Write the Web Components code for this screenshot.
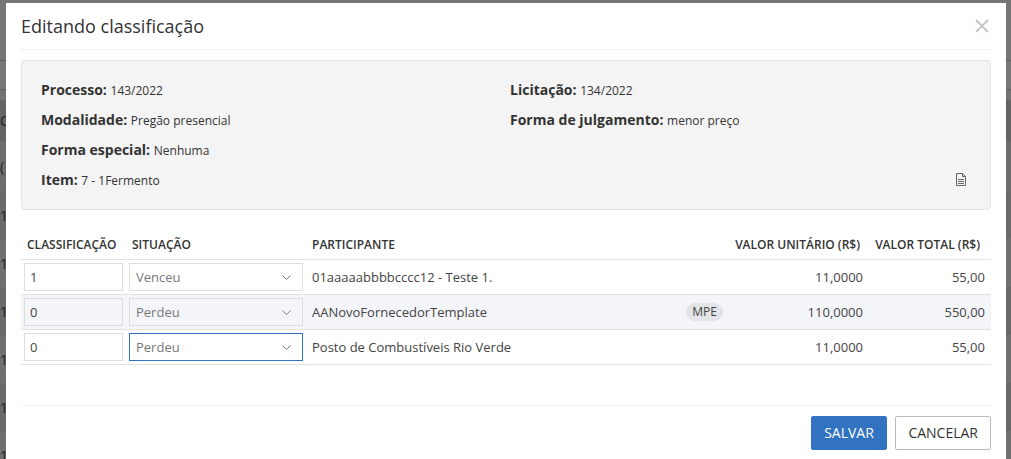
<!DOCTYPE html>
<html lang="pt-BR">
<head>
<meta charset="utf-8">
<title>Editando classificação</title>
<style>
  html, body { margin: 0; height: 100%; overflow: hidden; }
  body { font-family: "Open Sans", "Liberation Sans", sans-serif; color: #333; }
</style>
</head>
<body>
<page-behind></page-behind>
<edit-modal heading="Editando classificação">
  <info-card>
    <info-item label="Processo:" value="143/2022"></info-item>
    <info-item label="Licitação:" value="134/2022"></info-item>
    <info-item label="Modalidade:" value="Pregão presencial"></info-item>
    <info-item label="Forma de julgamento:" value="menor preço"></info-item>
    <info-item label="Forma especial:" value="Nenhuma"></info-item>
    <span></span>
    <info-item label="Item:" value="7 - 1Fermento"></info-item>
  </info-card>
  <rank-table>
    <rank-row classificacao="1" situacao="Venceu" participante="01aaaaabbbbcccc12 - Teste 1." unitario="11,0000" total="55,00"></rank-row>
    <rank-row classificacao="0" situacao="Perdeu" participante="AANovoFornecedorTemplate" unitario="110,0000" total="550,00" badge="MPE" disabled></rank-row>
    <rank-row classificacao="0" situacao="Perdeu" participante="Posto de Combustíveis Rio Verde" unitario="11,0000" total="55,00" focused></rank-row>
  </rank-table>
  <modal-button slot="footer" primary>SALVAR</modal-button>
  <modal-button slot="footer">CANCELAR</modal-button>
</edit-modal>

<script>
class PageBehind extends HTMLElement {
  constructor () {
    super();
    this.attachShadow({mode: 'open'});
    // height, colour, text, colour of the line under the row
    const rows = [[60, '#767676', '', '#5f5f5f'], [28, '#777777', '', '#5f5f5f'], [10, '#737373', '', ''],
      [41, '#646464', 'C', ''], [50, '#6d6d6d', '(', ''],
      [48, '#6a6a6a', '1', ''], [48, '#707070', '1', ''], [48, '#696969', '1', ''],
      [48, '#707070', '1', ''], [48, '#696969', '1', ''], [48, '#707070', '1', '']];
    this.shadowRoot.innerHTML = `
      <style>
        :host { display: block; height: 100vh; overflow: hidden; background: #6c6c6c; }
        .row { display: flex; align-items: center; font: 14px "Open Sans", sans-serif; color: #222; }
        .line { height: 1px; }
      </style>
      ${rows.map(r => `<div class="row" style="height:${r[0]}px;background:${r[1]}">${r[2]}</div>` +
        (r[3] ? `<div class="line" style="background:${r[3]}"></div>` : '')).join('')}
    `;
  }
}

class EditModal extends HTMLElement {
  constructor () {
    super();
    this.attachShadow({mode: 'open'});
    this.shadowRoot.innerHTML = `
      <style>
        :host {
          display: block;
          position: fixed;
          left: 6px;
          top: 3px;
          width: 1000px;
          height: 470px;
          box-sizing: border-box;
          padding: 0 15px;
          background: #fff;
          font-family: "Open Sans", sans-serif;
        }
        header {
          display: flex;
          justify-content: space-between;
          align-items: center;
          height: 46px;
          border-bottom: 1px solid #eee;
          margin-bottom: 10px;
        }
        h2 { margin: 0; font-size: 18px; font-weight: 400; color: #333; }
        svg { display: block; margin-right: 2px; }
        footer {
          display: flex;
          justify-content: flex-end;
          gap: 8px;
          margin-top: 40px;
          padding-top: 10px;
          border-top: 1px solid #f1f1f1;
        }
      </style>
      <header>
        <h2>${this.getAttribute('heading')}</h2>
        <svg width="14" height="14" viewBox="0 0 14 14"><path d="M1 1 13 13M13 1 1 13" stroke="#c4c4c4" stroke-width="1.8" fill="none"/></svg>
      </header>
      <slot></slot>
      <footer><slot name="footer"></slot></footer>
    `;
  }
}

class InfoCard extends HTMLElement {
  constructor () {
    super();
    this.attachShadow({mode: 'open'});
    this.shadowRoot.innerHTML = `
      <style>
        :host {
          display: block;
          position: relative;
          height: 150px;
          box-sizing: border-box;
          padding: 14px 19px;
          background: #f4f4f4;
          border: 1px solid #e3e3e3;
          border-radius: 4px;
        }
        .grid { display: grid; grid-template-columns: 469px 1fr; grid-auto-rows: 30px; }
        svg { position: absolute; right: 23px; bottom: 23px; }
      </style>
      <div class="grid"><slot></slot></div>
      <svg width="12" height="13" viewBox="0 0 12 13" fill="none" stroke="#666" stroke-width="1">
        <path d="M1.5 .5H7.5L10.5 3.5V12.5H1.5ZM7.5 .5V3.5H10.5"/>
        <path d="M3 6.5H9M3 8.5H9M3 10.5H9"/>
      </svg>
    `;
  }
}

class InfoItem extends HTMLElement {
  constructor () {
    super();
    this.attachShadow({mode: 'open'});
    this.shadowRoot.innerHTML = `
      <style>
        :host { display: block; line-height: 30px; font-size: 12px; color: #333; white-space: nowrap; }
        b { font-size: 14px; font-weight: 700; color: #333; }
      </style>
      <b>${this.getAttribute('label')} </b>${this.getAttribute('value')}
    `;
  }
}

const COLUMNS = '105px 180px 1fr 143px 123px';

class RankTable extends HTMLElement {
  constructor () {
    super();
    this.attachShadow({mode: 'open'});
    this.shadowRoot.innerHTML = `
      <style>
        :host { display: block; margin-top: 20px; }
        .head {
          display: grid;
          grid-template-columns: ${COLUMNS};
          height: 29px;
          align-items: center;
          border-bottom: 1px solid #e2e2e2;
          font-size: 12px;
          font-weight: 600;
          color: #333;
          white-space: nowrap;
        }
        .head span { padding-left: 6px; }
        .head .num { text-align: right; padding-right: 8px; }
        .head .num:last-child { padding-right: 11px; }
      </style>
      <div class="head">
        <span>CLASSIFICAÇÃO</span>
        <span>SITUAÇÃO</span>
        <span>PARTICIPANTE</span>
        <span class="num">VALOR UNITÁRIO (R$)</span>
        <span class="num">VALOR TOTAL (R$)</span>
      </div>
      <slot></slot>
    `;
  }
}

class RankRow extends HTMLElement {
  constructor () {
    super();
    this.attachShadow({mode: 'open'});
    const get = name => this.getAttribute(name);
    const badge = get('badge') ? `<em>${get('badge')}</em>` : '';
    this.shadowRoot.innerHTML = `
      <style>
        :host {
          display: grid;
          grid-template-columns: ${COLUMNS};
          height: 34px;
          align-items: center;
          border-bottom: 1px solid #e2e2e2;
          font-size: 13px;
          color: #444;
          white-space: nowrap;
        }
        :host([disabled]) { background: #f4f5f9; }
        .cell { padding: 0 6px; }
        .box {
          display: flex;
          align-items: center;
          justify-content: space-between;
          box-sizing: border-box;
          height: 28px;
          padding: 0 6px 0 5px;
          border: 1px solid #ddd;
          background: #fff;
          color: #444;
        }
        .first { padding: 0 3px; }
        .first .box { width: 99px; }
        .second { padding: 0 3px; }
        .second .box { width: 174px; padding: 0 11px 0 6px; color: #777; }
        :host([disabled]) .box { background: #f4f5f9; }
        :host([focused]) .second .box { border-color: #3173c1; }
        .who { display: flex; align-items: center; justify-content: space-between; padding-right: 2px; }
        em {
          font-style: normal;
          font-size: 12px;
          line-height: 18px;
          padding: 0 6px;
          border-radius: 9px;
          background: #e3e4e8;
        }
        .num { text-align: right; padding: 0 5px; }
        .num:last-child { padding-right: 6px; }
      </style>
      <div class="cell first"><div class="box">${get('classificacao')}</div></div>
      <div class="cell second"><div class="box">${get('situacao')}
        <svg width="9" height="5" viewBox="0 0 9 5" fill="none" stroke="#777"><path d="M.5 .5 4.5 4.5 8.5 .5"/></svg>
      </div></div>
      <div class="cell who"><span>${get('participante')}</span>${badge}</div>
      <div class="cell num">${get('unitario')}</div>
      <div class="cell num">${get('total')}</div>
    `;
  }
}

class ModalButton extends HTMLElement {
  constructor () {
    super();
    this.attachShadow({mode: 'open'});
    this.shadowRoot.innerHTML = `
      <style>
        :host {
          display: inline-block;
          box-sizing: border-box;
          height: 34px;
          line-height: 32px;
          padding: 0 12px;
          border: 1px solid #bbb;
          border-radius: 2px;
          font-size: 14px;
          color: #333;
          background: #fff;
        }
        :host([primary]) { padding: 0 12.5px; background: #3173c1; border-color: #3173c1; color: #fff; }
      </style>
      <slot></slot>
    `;
  }
}

customElements.define('page-behind', PageBehind);
customElements.define('edit-modal', EditModal);
customElements.define('info-card', InfoCard);
customElements.define('info-item', InfoItem);
customElements.define('rank-table', RankTable);
customElements.define('rank-row', RankRow);
customElements.define('modal-button', ModalButton);
</script>
</body>
</html>
